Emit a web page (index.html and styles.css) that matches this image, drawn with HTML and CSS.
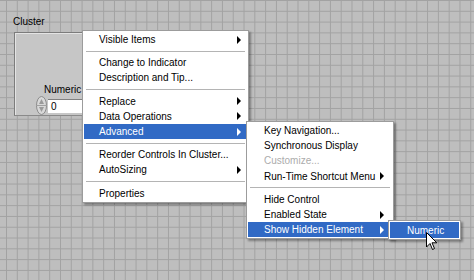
FILE: index.html
```html
<!DOCTYPE html>
<html lang="en">
<head>
    <meta charset="UTF-8">
    <title>Cluster shortcut menu</title>
    <link rel="stylesheet" href="styles.css">
</head>
<body>
    <div class="canvas">
        <!-- Кластер с числовым элементом -->
        <div class="cluster">
            <div class="cluster-label">Cluster</div>
            <div class="cluster-box">
                <div class="numeric-label">Numeric</div>
                <div class="numeric-row">
                    <svg class="spin" width="11" height="19" viewBox="0 0 11 19">
                        <ellipse cx="5.5" cy="9.5" rx="5" ry="9" fill="#d8d8d8" stroke="#8c8c8c"/>
                        <path d="M5.5 3 L8 8 H3 Z" fill="#9a9a9a"/>
                        <path d="M5.5 16 L8 11 H3 Z" fill="#9a9a9a"/>
                        <line x1="1" y1="9.5" x2="10" y2="9.5" stroke="#a0a0a0"/>
                    </svg>
                    <span class="numeric-field">0</span>
                </div>
            </div>
        </div>

        <!-- Главное контекстное меню -->
        <ul class="menu main-menu">
            <li class="item">Visible Items<span class="arrow"></span></li>
            <li class="sep"></li>
            <li class="item">Change to Indicator</li>
            <li class="item">Description and Tip...</li>
            <li class="sep"></li>
            <li class="item">Replace<span class="arrow"></span></li>
            <li class="item">Data Operations<span class="arrow"></span></li>
            <li class="item selected">Advanced<span class="arrow"></span></li>
            <li class="sep"></li>
            <li class="item">Reorder Controls In Cluster...</li>
            <li class="item">AutoSizing<span class="arrow"></span></li>
            <li class="sep"></li>
            <li class="item">Properties</li>
        </ul>

        <!-- Подменю Advanced -->
        <ul class="menu sub-menu">
            <li class="item">Key Navigation...</li>
            <li class="item">Synchronous Display</li>
            <li class="item disabled">Customize...</li>
            <li class="item">Run-Time Shortcut Menu<span class="arrow"></span></li>
            <li class="sep"></li>
            <li class="item">Hide Control</li>
            <li class="item">Enabled State<span class="arrow"></span></li>
            <li class="item selected">Show Hidden Element<span class="arrow"></span></li>
        </ul>

        <!-- Подменю Show Hidden Element -->
        <ul class="menu third-menu">
            <li class="item selected">Numeric</li>
        </ul>

        <svg class="cursor" width="12" height="19" viewBox="0 0 12 19">
            <path d="M0.5 0.5 L0.5 15 L4 11.5 L6.5 17.5 L8.5 16.5 L6 10.8 L10.8 10.8 Z" fill="#fff" stroke="#000" stroke-width="1" stroke-linejoin="round"/>
        </svg>
    </div>
</body>
</html>
```

FILE: styles.css
```css
body, html {
    margin: 0;
    padding: 0;
    height: 100%;
}
body {
    background-color: #bebebe;
    background-image:
        linear-gradient(to right, #a2a2a2 1px, transparent 1px),
        linear-gradient(to bottom, #a2a2a2 1px, transparent 1px);
    background-size: 10.8px 10.8px;
    background-position: 6px 0;
    font-family: "Liberation Sans", Arial, sans-serif;
    font-size: 10px;
    color: #000;
}
.canvas {
    position: relative;
    width: 474px;
    height: 280px;
    overflow: hidden;
}
.cluster {
    padding: 16px 0 0 13px;
}
.cluster-label {
    height: 14px;
    line-height: 12px;
    margin-bottom: 2px;
}
.cluster-box {
    width: 100px;
    height: 84px;
    margin-left: 1px;
    background-color: #c6c6c6;
    border-top: 1px solid #7c7c7c;
    border-left: 1px solid #7c7c7c;
    border-bottom: 1px solid #8a8a8a;
    box-shadow: inset 1px 1px 0 #e4e4e4;
    box-sizing: border-box;
    padding: 51px 0 0 21px;
}
.numeric-label {
    margin-left: 8px;
    line-height: 11px;
}
.numeric-row {
    display: flex;
    align-items: center;
    gap: 1px;
    margin-top: 1px;
}
.spin {
    display: block;
}
.numeric-field {
    width: 60px;
    height: 14px;
    line-height: 14px;
    background-color: #fff;
    border-top: 1px solid #808080;
    padding-left: 3px;
    box-sizing: border-box;
}
.menu {
    position: absolute;
    list-style: none;
    margin: 0;
    padding: 1px;
    background-color: #fff;
    border: 1px solid #9c9c9c;
    box-shadow: 2px 2px 2px rgba(0, 0, 0, 0.35);
}
.main-menu {
    left: 82px;
    top: 30px;
    width: 163px;
}
.sub-menu {
    left: 246px;
    top: 121px;
    width: 144px;
    z-index: 2;
}
.third-menu {
    left: 388px;
    top: 220px;
    width: 71px;
    padding: 0;
    border: 1px solid #9c9c9c;
    z-index: 3;
}
.item {
    display: flex;
    align-items: center;
    justify-content: space-between;
    height: 15.2px;
    padding: 0 6px 0 15px;
    white-space: nowrap;
}
.sub-menu .item {
    padding-left: 16px;
    padding-right: 8px;
}
.sub-menu .item.selected {
    margin-right: 4px;
    padding-right: 4px;
}
.third-menu .item {
    height: 16px;
    padding-left: 17px;
    border: 1px solid #fff;
}
.item.selected {
    background-color: #316ac5;
    color: #fff;
}
.item.disabled {
    color: #acacac;
}
.sep {
    height: 1px;
    margin: 3.5px 2px;
    background-color: #b4b4b4;
}
.arrow {
    width: 0;
    height: 0;
    border-top: 4px solid transparent;
    border-bottom: 4px solid transparent;
    border-left: 4px solid #000;
}
.selected .arrow {
    border-left-color: #fff;
}
.cursor {
    position: absolute;
    left: 426px;
    top: 232px;
    z-index: 4;
}
```
